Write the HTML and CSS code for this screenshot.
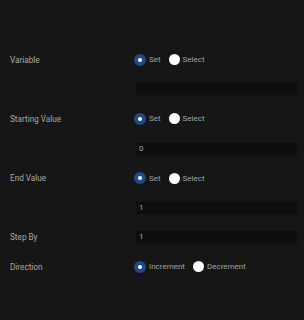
FILE: index.html
```html
<!DOCTYPE html>
<html>
<head>
<meta charset="utf-8">
<link rel="stylesheet" href="styles.css">
</head>
<body>
<div class="form">
  <div class="label">Variable</div>
  <div class="radios">
    <span class="opt"><span class="radio on"></span>Set</span>
    <span class="opt"><span class="radio"></span>Select</span>
  </div>
  <div></div>
  <div class="input"></div>

  <div class="label">Starting Value</div>
  <div class="radios">
    <span class="opt"><span class="radio on"></span>Set</span>
    <span class="opt"><span class="radio"></span>Select</span>
  </div>
  <div></div>
  <div class="input">0</div>

  <div class="label">End Value</div>
  <div class="radios">
    <span class="opt"><span class="radio on"></span>Set</span>
    <span class="opt"><span class="radio"></span>Select</span>
  </div>
  <div></div>
  <div class="input">1</div>

  <div class="label">Step By</div>
  <div class="input">1</div>

  <div class="label">Direction</div>
  <div class="radios">
    <span class="opt"><span class="radio on"></span>Increment</span>
    <span class="opt"><span class="radio"></span>Decrement</span>
  </div>
</div>
</body>
</html>
```
FILE: styles.css
```css
html, body {
  margin: 0;
  padding: 0;
  background: #161616;
  height: 100%;
}
body {
  font-family: Roboto, "Noto Sans", sans-serif;
  font-size: 8px;
  color: #a9a9a9;
}
.form {
  display: grid;
  grid-template-columns: 124px 164px;
  grid-auto-rows: 29.6px;
  align-items: center;
  padding: 45px 0 0 10px;
}
.label {
  color: #a9a9a9;
  font-size: 8.2px;
}
.radios {
  display: flex;
  align-items: center;
  gap: 8px;
}
.opt {
  display: flex;
  align-items: center;
  gap: 3px;
  color: #a3a3a3;
}
.radio {
  width: 11px;
  height: 11px;
  border-radius: 50%;
  background: #ffffff;
  box-sizing: border-box;
}
.radio.on {
  width: 12px;
  height: 12px;
  background: #ffffff;
  border: 4px solid #1e4b8c;
}
.input {
  height: 14px;
  margin-left: 1px;
  background: #0e0e0e;
  border: 1px solid #141414;
  border-radius: 2px;
  box-sizing: border-box;
  padding-left: 3px;
  line-height: 12px;
  color: #ababab;
}
```
